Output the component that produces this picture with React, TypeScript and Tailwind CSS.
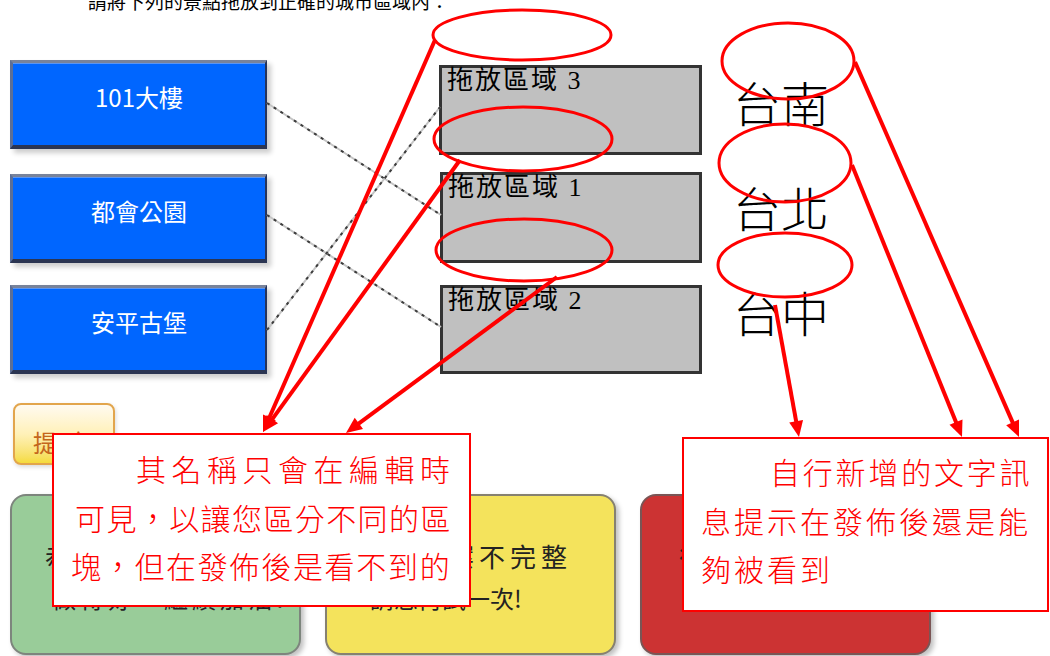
const cjk = "font-['Noto_Sans_CJK_TC','Noto_Sans_CJK_SC',sans-serif]";

type Pt = [number, number];

// arrow head polygon for a line that ends at `tip`
function head(from: Pt, tip: Pt, len = 16, w = 7) {
    const dx = tip[0] - from[0];
    const dy = tip[1] - from[1];
    const d = Math.hypot(dx, dy);
    const ux = dx / d;
    const uy = dy / d;
    const bx = tip[0] - ux * len;
    const by = tip[1] - uy * len;
    return {
        base: [bx + ux * 2, by + uy * 2] as Pt,
        points: `${tip[0]},${tip[1]} ${bx - uy * w},${by + ux * w} ${bx + uy * w},${by - ux * w}`,
    };
}

const arrows: [Pt, Pt][] = [
    [[435, 40], [263, 432]],
    [[460, 160], [263, 432]],
    [[557, 277], [346, 433]],
    [[855, 62], [1019, 437]],
    [[852, 165], [962, 437]],
    [[775, 305], [799, 437]],
];

const ellipses = [
    { cx: 522, cy: 35, rx: 89, ry: 25 },
    { cx: 523, cy: 139, rx: 89, ry: 32 },
    { cx: 524, cy: 250, rx: 88, ry: 31 },
    { cx: 788, cy: 61, rx: 66, ry: 38 },
    { cx: 785, cy: 163, rx: 66, ry: 39 },
    { cx: 785, cy: 265, rx: 67, ry: 32 },
];

const links: [Pt, Pt][] = [
    [[267, 103], [441, 215]],
    [[267, 215], [441, 327]],
    [[267, 330], [440, 107]],
];

function PlaceButton({ label, className = '' }: { label: string; className?: string }) {
    return (
        <div
            className={`h-[89px] bg-[#0066ff] border-t-[3px] border-t-[#78839b] border-l-[3px] border-l-[#5d6f96] border-r-2 border-r-[#26345a] border-b-4 border-b-[#2b3552] shadow-[inset_0_1px_0_#5b95f2,4px_4px_5px_rgba(0,0,0,0.2)] pt-[22px] text-center text-[24px] leading-[24px] text-white ${className}`}
        >
            {label}
        </div>
    );
}

function DropZone({ label, className = '' }: { label: string; className?: string }) {
    return (
        <div className={`bg-[#c0c0c0] border-[3px] border-[#333333] pl-[5px] ${className}`}>
            <span className="font-['Liberation_Serif','Noto_Sans_CJK_TC',serif] text-[26px] leading-[26px] tracking-[2px] text-black">
                {label}
            </span>
        </div>
    );
}

export default function App() {
    return (
        <div className={`relative w-[1050px] h-[656px] overflow-hidden bg-white ${cjk}`}>
            {/* instruction line, cut off by the top edge */}
            <p className="-mt-[9px] pl-[88px] text-[19px] leading-[19px] text-black">
                請將下列的景點拖放到正確的城市區域內：
            </p>

            <div className="mt-[50px] flex">
                {/* draggable places */}
                <div className="ml-[10px] w-[257px] flex flex-col">
                    <PlaceButton label="101大樓" />
                    <PlaceButton label="都會公園" className="mt-[25px]" />
                    <PlaceButton label="安平古堡" className="mt-[22px]" />
                </div>

                {/* drop zones */}
                <div className="ml-[173px] w-[262px] flex flex-col pt-[5px]">
                    <DropZone label="拖放區域 3" className="h-[90px] -ml-[1px]" />
                    <DropZone label="拖放區域 1" className="h-[91px] mt-[17px]" />
                    <DropZone label="拖放區域 2" className="h-[89px] mt-[22px]" />
                </div>

                {/* city labels */}
                <div className="ml-[31px] flex flex-col gap-[57px] pt-[17px] text-[48px] leading-[48px] font-light text-black">
                    <span>台南</span>
                    <span>台北</span>
                    <span>台中</span>
                </div>
            </div>

            <button className="mt-[29px] ml-[13px] block w-[102px] h-[62px] rounded-lg border-2 border-[#e2a54c] bg-linear-to-b from-[#fffaf0] via-[#fff1b8] to-[#f5db3a] pt-[16px] pl-[18px] text-left text-[24px] leading-[24px] tracking-[10px] text-[#c4661c] shadow-[1px_2px_4px_rgba(0,0,0,0.15)]">
                提交
            </button>

            {/* feedback cards */}
            <div className="mt-[29px] ml-[10px] flex gap-[24px] text-[#222]">
                <div className="w-[291px] h-[161px] rounded-2xl border-2 border-[#7d857d] bg-[#99cc99] pt-[43px] pl-[33px] shadow-[3px_3px_5px_rgba(0,0,0,0.25)]">
                    <p className="text-[26px] leading-[34px] tracking-[5px]">恭喜您全部答對了</p>
                    <p className="mt-[8px] pl-[7px] text-[24px] leading-[34px] tracking-[4px]">做得好，繼續加油!</p>
                </div>
                <div className="w-[291px] h-[161px] rounded-2xl border-2 border-[#868170] bg-[#f4e35c] pt-[43px] shadow-[3px_3px_5px_rgba(0,0,0,0.25)]">
                    <p className="pl-[28px] text-[26px] leading-[34px] tracking-[5px]">您的答案不完整</p>
                    <p className="mt-[8px] pl-[43px] text-[24px] leading-[34px]">請您再試一次!</p>
                </div>
                <div className="w-[291px] h-[161px] rounded-2xl border-2 border-[#7a5555] bg-[#cc3333] pt-[43px] pl-[37px] shadow-[3px_3px_5px_rgba(0,0,0,0.25)]">
                    <p className="text-[26px] leading-[34px] tracking-[5px]">很抱歉，答錯了</p>
                    <p className="mt-[8px] pl-[4px] text-[24px] leading-[34px] tracking-[4px]">請再試一次!</p>
                </div>
            </div>

            {/* callouts */}
            <div className="absolute left-[52px] top-[433px] w-[419px] h-[174px] border-2 border-[#ff0000] bg-white pt-[9px] text-[30px] leading-[48.5px] font-light text-[#ff0000] whitespace-nowrap">
                <p className="pl-[82px] tracking-[5.5px]">其名稱只會在編輯時</p>
                <p className="pl-[21px] tracking-[1.4px]">可見，以讓您區分不同的區</p>
                <p className="pl-[17px] tracking-[1.7px]">塊，但在發佈後是看不到的</p>
            </div>
            <div className="absolute left-[682px] top-[437px] w-[367px] h-[175px] border-2 border-[#ff0000] bg-white pt-[8px] text-[30px] leading-[48.5px] font-light text-[#ff0000] whitespace-nowrap">
                <p className="pl-[86px] tracking-[2.8px]">自行新增的文字訊</p>
                <p className="pl-[17px] tracking-[3px]">息提示在發佈後還是能</p>
                <p className="pl-[17px] tracking-[3px]">夠被看到</p>
            </div>

            {/* connections and annotations */}
            <svg className="absolute inset-0 pointer-events-none" width={1050} height={656}>
                {links.map(([a, b], i) => (
                    <g key={i}>
                        <line x1={a[0]} y1={a[1]} x2={b[0]} y2={b[1]} stroke="#c4c4c4" strokeWidth={2} />
                        <line x1={a[0]} y1={a[1]} x2={b[0]} y2={b[1]} stroke="#3c3c3c" strokeWidth={2} strokeDasharray="3 5" />
                    </g>
                ))}
                {ellipses.map((e, i) => (
                    <ellipse key={i} cx={e.cx} cy={e.cy} rx={e.rx} ry={e.ry} fill="none" stroke="#ff0000" strokeWidth={3} />
                ))}
                {arrows.map(([from, tip], i) => {
                    const h = head(from, tip);
                    return (
                        <g key={i}>
                            <line x1={from[0]} y1={from[1]} x2={h.base[0]} y2={h.base[1]} stroke="#ff0000" strokeWidth={4} />
                            <polygon points={h.points} fill="#ff0000" />
                        </g>
                    );
                })}
            </svg>
        </div>
    );
}
